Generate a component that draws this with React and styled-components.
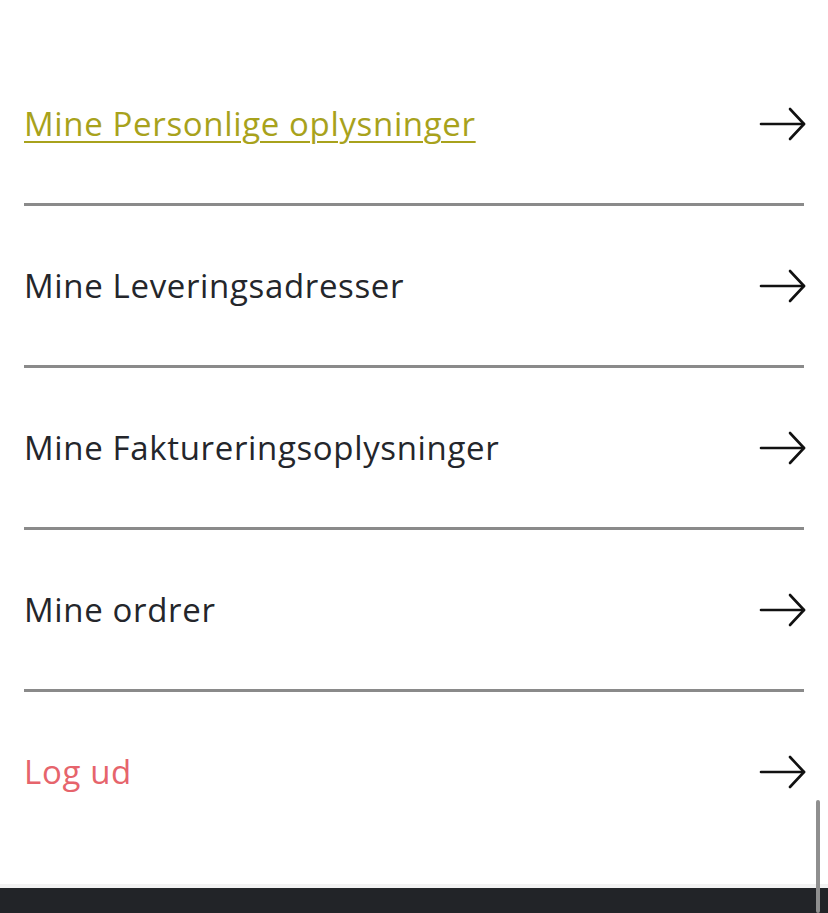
import React from 'react'
import styled, { createGlobalStyle } from 'styled-components'

const GlobalStyle = createGlobalStyle`
  html, body {
    margin: 0;
    padding: 0;
    background: #fff;
  }
  body {
    font-family: "Open Sans", "Noto Sans", sans-serif;
  }
`

const items = [
  { label: 'Mine Personlige oplysninger', tone: 'active' },
  { label: 'Mine Leveringsadresser' },
  { label: 'Mine Faktureringsoplysninger' },
  { label: 'Mine ordrer' },
  { label: 'Log ud', tone: 'danger' },
]

function Arrow() {
  return (
    <ArrowIcon viewBox="0 0 48 34" fill="none" stroke="#111" strokeWidth="2.6" strokeLinecap="round" strokeLinejoin="round">
      <path d="M2 17 H45" />
      <path d="M31 2 L45 17 L31 32" />
    </ArrowIcon>
  )
}

export default function App() {
  return (
    <>
      <GlobalStyle />
      <Page>
        <Menu>
          {items.map(item => (
            <Row key={item.label}>
              <Label tone={item.tone}>{item.label}</Label>
              <Arrow />
            </Row>
          ))}
        </Menu>
        <Footer />
        <ScrollThumb />
      </Page>
    </>
  )
}

const Page = styled.div`
  min-height: 913px;
  display: flex;
  flex-direction: column;
`

const Menu = styled.ul`
  list-style: none;
  margin: 0;
  padding: 44px 24px 0;
  flex: 1;
  border-bottom: 4px solid #f2f2f2;
`

const Row = styled.li`
  height: 159px;
  display: flex;
  align-items: center;
  justify-content: space-between;
  border-bottom: 3px solid #8a8a8a;
  cursor: pointer;

  &:last-child {
    border-bottom: none;
  }
`

const toneColor = {
  active: '#a8a21c',
  danger: '#e6646c',
}

const Label = styled.span`
  font-size: 33px;
  letter-spacing: 0.65px;
  color: ${props => toneColor[props.tone] || '#24262b'};
  text-decoration: ${props => (props.tone === 'active' ? 'underline' : 'none')};
  text-decoration-thickness: 2px;
  text-underline-offset: 5px;
`

const ArrowIcon = styled.svg`
  width: 48px;
  height: 34px;
  margin-right: -3px;
`

const Footer = styled.footer`
  height: 25px;
  background: #222428;
`

const ScrollThumb = styled.div`
  position: fixed;
  right: 8px;
  top: 800px;
  bottom: 0;
  width: 4px;
  border-radius: 2px;
  background: #8f8f8f;
`
